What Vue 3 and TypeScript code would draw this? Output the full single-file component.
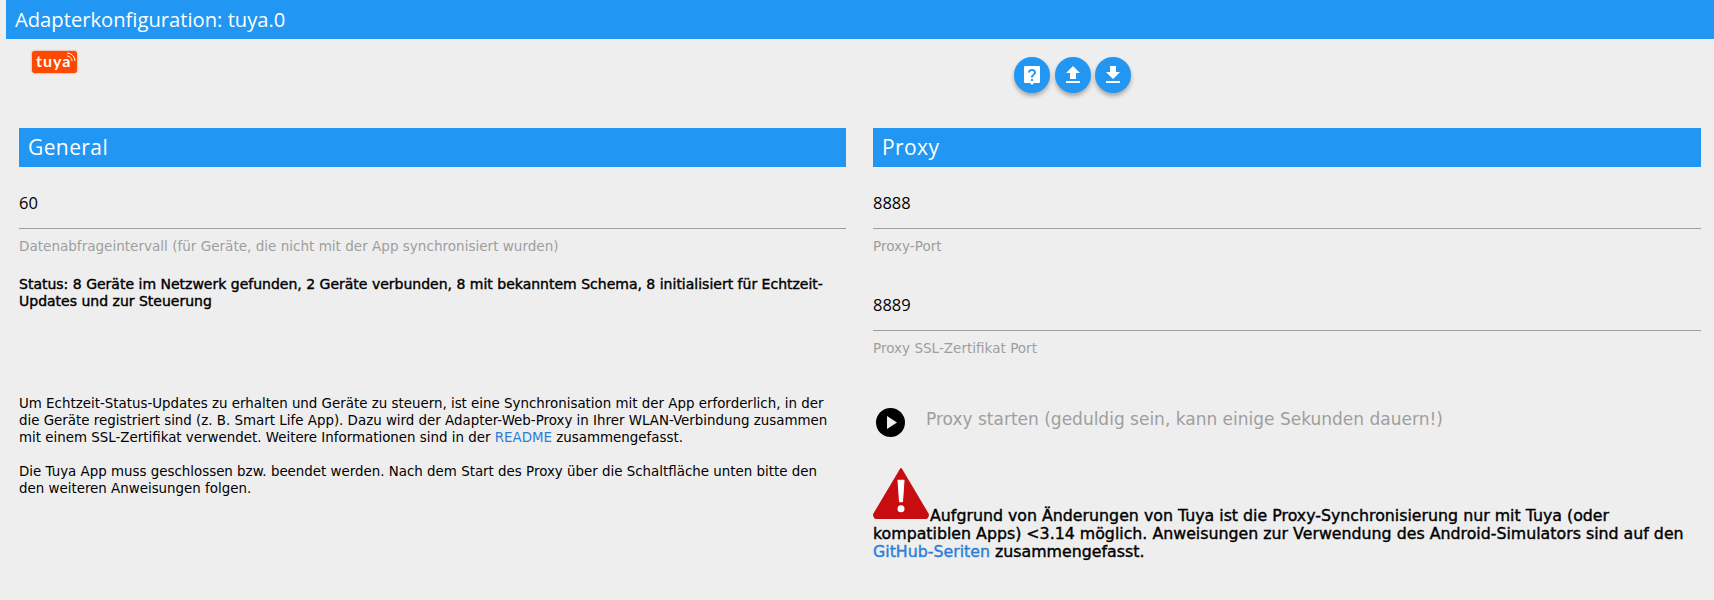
<script setup lang="ts">
const statusText = 'Status: 8 Geräte im Netzwerk gefunden, 2 Geräte verbunden, 8 mit bekanntem Schema, 8 initialisiert für Echtzeit-Updates und zur Steuerung'
</script>

<template>
  <div class="page">
    <header class="title">Adapterkonfiguration: tuya.0</header>
    <div class="toolbar">
      <div class="logo">
        <span>tuya</span>
        <svg class="wifi" viewBox="0 0 10 10" width="10" height="10">
          <path d="M1 4a5 5 0 0 1 5 5M1 1a8 8 0 0 1 8 8" fill="none" stroke="#fff" stroke-width="1" />
        </svg>
      </div>
      <div class="buttons">
        <button class="fab" aria-label="Hilfe">
          <svg viewBox="0 0 24 24" width="24" height="24"><path fill="#fff" fill-rule="evenodd" d="M5 3h14a1 1 0 0 1 1 1v15a1 1 0 0 1-1 1h-5l-2 2-2-2H5a1 1 0 0 1-1-1V4a1 1 0 0 1 1-1zm6 13v2h2v-2h-2zm1-10c-2.200 0-4 1.500-4 3.500h2c0-1 .9-1.700 2-1.700s2 .7 2 1.700c0 1.800-3 1.600-3 5h2c0-2.300 3-2.600 3-5 0-2-1.800-3.500-4-3.500z"/></svg>
        </button>
        <button class="fab" aria-label="Hochladen">
          <svg viewBox="0 0 24 24" width="24" height="24"><path fill="#fff" d="M9 16h6v-6h4l-7-7-7 7h4v6zm-4 2h14v2H5v-2z"/></svg>
        </button>
        <button class="fab" aria-label="Herunterladen">
          <svg viewBox="0 0 24 24" width="24" height="24"><path fill="#fff" d="M19 9h-4V3H9v6H5l7 7 7-7zM5 18v2h14v-2H5z"/></svg>
        </button>
      </div>
    </div>
    <div class="columns">
      <section class="col">
        <h2 class="sec">General</h2>
        <div class="field">
          <div class="value">60</div>
          <div class="hint">Datenabfrageintervall (für Geräte, die nicht mit der App synchronisiert wurden)</div>
        </div>
        <p class="status">{{ statusText }}</p>
        <p class="info">Um Echtzeit-Status-Updates zu erhalten und Geräte zu steuern, ist eine Synchronisation mit der App erforderlich, in der die Geräte registriert sind (z. B. Smart Life App). Dazu wird der Adapter-Web-Proxy in Ihrer WLAN-Verbindung zusammen mit einem SSL-Zertifikat verwendet. Weitere Informationen sind in der <a href="#">README</a> zusammengefasst.</p>
        <p class="info second">Die Tuya App muss geschlossen bzw. beendet werden. Nach dem Start des Proxy über die Schaltfläche unten bitte den den weiteren Anweisungen folgen.</p>
      </section>
      <section class="col">
        <h2 class="sec">Proxy</h2>
        <div class="field">
          <div class="value">8888</div>
          <div class="hint">Proxy-Port</div>
        </div>
        <div class="field next">
          <div class="value">8889</div>
          <div class="hint">Proxy SSL-Zertifikat Port</div>
        </div>
        <div class="start">
          <span class="play"><svg viewBox="0 0 29 29" width="29" height="29"><circle cx="14.500" cy="14.500" r="14.500" fill="#000"/><path d="M11 8l10 6.500-10 6.500z" fill="#eee"/></svg></span>
          <span class="start-text">Proxy starten (geduldig sein, kann einige Sekunden dauern!)</span>
        </div>
        <p class="warn"><svg class="tri" viewBox="0 0 56 52" width="56" height="53" preserveAspectRatio="none"><path d="M28 3L54 46a3 3 0 0 1-3 5H5a3 3 0 0 1-3-5z" fill="#c80d10" stroke="#c80d10" stroke-width="2" stroke-linejoin="round"/><path d="M25 14h6l-1.500 21h-3z" fill="#fff" stroke="#fff" stroke-linejoin="round"/><circle cx="28" cy="42" r="3.500" fill="#fff"/></svg>Aufgrund von Änderungen von Tuya ist die Proxy-Synchronisierung nur mit Tuya (oder kompatiblen Apps) &lt;3.14 möglich. Anweisungen zur Verwendung des Android-Simulators sind auf den <a href="#">GitHub-Seriten</a> zusammengefasst.</p>
      </section>
    </div>
  </div>
</template>

<style>
html, body { margin: 0; background: #eee; }
</style>

<style scoped>
.page {
  height: 600px;
  overflow: hidden;
  background: #eee;
  padding-left: 6px;
  box-sizing: border-box;
  font-family: "DejaVu Sans", sans-serif;
}
.title {
  height: 39px;
  line-height: 39px;
  background: #2196f3;
  color: #fff;
  font-family: "Open Sans", sans-serif;
  font-size: 20.200px;
  padding-left: 9px;
}
.toolbar {
  position: relative;
  height: 89px;
}
.logo {
  position: absolute;
  left: 26px;
  top: 12px;
  width: 45px;
  height: 22px;
  background: #ff4800;
  border-radius: 3px;
  box-shadow: 0 0 2px rgba(200, 60, 0, .7);
  color: #fff;
  font-family: "Lato", sans-serif;
  font-weight: 700;
  font-size: 16px;
  letter-spacing: 1px;
  line-height: 20px;
  padding-left: 4px;
  box-sizing: border-box;
}
.wifi { position: absolute; right: 1px; top: 1px; }
.buttons {
  position: absolute;
  left: 1008px;
  top: 18px;
  display: flex;
  gap: 4.500px;
}
.fab {
  width: 36px;
  height: 36px;
  padding: 0;
  border: 0;
  border-radius: 50%;
  background: #2196f3;
  display: flex;
  align-items: center;
  justify-content: center;
  box-shadow: 0 3px 4px rgba(0, 0, 0, .3);
}
.columns {
  display: grid;
  grid-template-columns: 827px 828px;
  column-gap: 27px;
  padding-left: 13px;
}
.sec {
  margin: 0;
  height: 39px;
  line-height: 39px;
  background: #2196f3;
  color: #fff;
  font-family: "Open Sans", sans-serif;
  font-weight: 400;
  font-size: 21px;
  letter-spacing: .4px;
  padding-left: 9px;
}
.field { padding-top: 21px; }
.field.next { padding-top: 36px; }
.value {
  height: 40px;
  line-height: 30px;
  border-bottom: 1px solid #9e9e9e;
  font-family: "Open Sans", sans-serif;
  font-size: 16.500px;
  color: #000;
}
.hint {
  margin-top: 9px;
  font-size: 13.550px;
  line-height: 16px;
  color: #9e9e9e;
}
.status {
  margin: 22px 0 0;
  font-size: 14px;
  -webkit-text-stroke: .4px #000;
  line-height: 17px;
  color: #000;
}
.info {
  margin: 85px 0 0;
  padding-right: 10px;
  font-size: 13.400px;
  line-height: 17px;
  color: #000;
}
.info.second { margin-top: 17px; }
a { color: #2b7fd8; text-decoration: none; }
.start {
  display: flex;
  align-items: center;
  margin-top: 46px;
  height: 40px;
}
.play { display: flex; margin-left: 3px; width: 50px; }
.start-text { font-size: 17px; color: #9e9e9e; position: relative; top: -3px; }
.warn {
  margin: 24px 0 0;
  font-size: 15.800px;
  -webkit-text-stroke: .4px #000;
  line-height: 18px;
  color: #000;
}
.warn a { -webkit-text-stroke: .4px #2b7fd8; }
.tri { vertical-align: 2px; margin-right: 1px; }
</style>
